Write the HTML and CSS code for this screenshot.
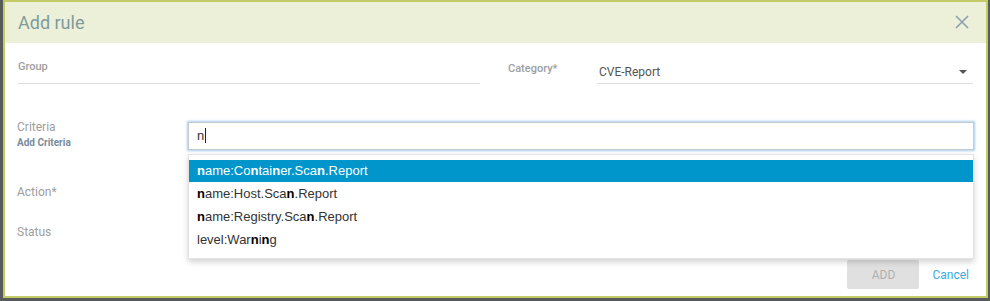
FILE: index.html
```html
<!DOCTYPE html>
<html lang="en">
<head>
    <meta charset="UTF-8">
    <meta name="viewport" content="width=device-width, initial-scale=1.0">
    <title>Add rule</title>
    <link rel="stylesheet" href="styles.css">
</head>
<body>
    <div class="dialog">
        <div class="dialog-header">
            <h1>Add rule</h1>
            <svg class="close" width="14" height="14" viewBox="0 0 14 14">
                <path d="M1 1 L13 13 M13 1 L1 13" stroke="#8e9fae" stroke-width="1.6" fill="none"/>
            </svg>
        </div>

        <div class="dialog-body">
            <div class="row row-top">
                <div class="group-field">Group</div>
                <div class="category-label">Category*</div>
                <div class="select-field">
                    <span>CVE-Report</span>
                    <span class="arrow"></span>
                </div>
            </div>

            <div class="row row-criteria">
                <div class="side-label">
                    <div class="criteria-title">Criteria</div>
                    <div class="criteria-sub">Add Criteria</div>
                </div>
                <div class="criteria-field">
                    <div class="text-input">n<span class="caret"></span></div>
                    <ul class="suggestions">
                        <li class="active"><b>n</b>ame:Co<b>n</b>tai<b>n</b>er.Sca<b>n</b>.Report</li>
                        <li><b>n</b>ame:Host.Sca<b>n</b>.Report</li>
                        <li><b>n</b>ame:Registry.Sca<b>n</b>.Report</li>
                        <li>level:War<b>n</b>i<b>n</b>g</li>
                    </ul>
                </div>
            </div>

            <div class="row row-action">
                <div class="side-label">Action*</div>
            </div>

            <div class="row row-status">
                <div class="side-label">Status</div>
            </div>

            <div class="dialog-footer">
                <button type="button" class="btn-add" disabled>ADD</button>
                <a class="btn-cancel">Cancel</a>
            </div>
        </div>
    </div>
</body>
</html>
```

FILE: styles.css
```css
body {
    margin: 0;
    background-color: #595b5a;
    font-family: 'Roboto', 'Liberation Sans', sans-serif;
    height: 301px;
    overflow: hidden;
}

.dialog {
    box-sizing: border-box;
    width: 985px;
    margin-left: 3px;
    background: #ffffff;
    border: 2px solid #c3cb68;
}

.dialog-header {
    height: 41px;
    background: #edf0d8;
    display: flex;
    align-items: center;
    justify-content: space-between;
    padding: 0 17px 0 13px;
}

h1 {
    margin: 0;
    font-size: 18px;
    font-weight: 400;
    color: #7e9b9d;
}

.close {
    margin-top: -2px;
}

.dialog-body {
    padding: 0 12px 7px 12px;
}

.row {
    display: flex;
}

.row-top {
    margin-top: 12px;
    height: 29px;
}

.group-field {
    box-sizing: border-box;
    width: 462px;
    margin-left: 1px;
    height: 29px;
    border-bottom: 1px solid #dedede;
    padding-top: 5px;
    font-size: 11px;
    line-height: 14px;
    font-weight: 500;
    color: #9e9e9e;
}

.category-label {
    width: 89px;
    margin-left: 28px;
    padding-top: 7px;
    font-size: 11px;
    line-height: 14px;
    font-weight: 500;
    color: #9e9e9e;
}

.select-field {
    box-sizing: border-box;
    width: 376px;
    height: 29px;
    border-bottom: 1px solid #dedede;
    padding: 10px 6px 0 2px;
    display: flex;
    justify-content: space-between;
    font-size: 12px;
    line-height: 14px;
    color: #555555;
}

.arrow {
    margin-top: 5px;
    width: 0;
    height: 0;
    border-left: 4px solid transparent;
    border-right: 4px solid transparent;
    border-top: 4px solid #555555;
}

.row-criteria {
    margin-top: 38px;
    height: 28px;
    align-items: flex-start;
}

.side-label {
    width: 171px;
    font-size: 12px;
    line-height: 20px;
    color: #9e9e9e;
}

.row-criteria .side-label {
    margin-top: -2px;
}

.criteria-title {
    line-height: 14px;
}

.criteria-sub {
    margin-top: 3px;
    font-size: 10px;
    line-height: 12px;
    font-weight: 700;
    color: #7a8b9c;
}

.criteria-field {
    position: relative;
    width: 786px;
}

.text-input {
    box-sizing: border-box;
    height: 28px;
    border: 1px solid #c6cbd0;
    box-shadow: 0 0 2px 1px #a6cdef;
    padding-left: 8px;
    font-family: 'Liberation Sans', Arial, sans-serif;
    font-size: 13px;
    line-height: 26px;
    color: #333333;
}

.caret {
    display: inline-block;
    width: 1px;
    height: 15px;
    margin-left: 1px;
    background: #222222;
    vertical-align: -3px;
}

.suggestions {
    position: absolute;
    top: 32px;
    left: 0;
    right: 0;
    margin: 0;
    padding: 5px 0 7px 0;
    list-style: none;
    background: #ffffff;
    border: 1px solid #e2e2e2;
    box-shadow: 0 3px 6px rgba(0, 0, 0, 0.18);
    font-family: 'Liberation Sans', Arial, sans-serif;
    font-size: 13px;
    color: #333333;
}

.suggestions li {
    height: 23px;
    line-height: 23px;
    padding-left: 8px;
}

.suggestions li.active {
    background: #0096cc;
    color: #ffffff;
    height: 22px;
    line-height: 22px;
}

.suggestions b {
    color: #000000;
}

.suggestions li.active b {
    color: #ffffff;
}

.row-action {
    margin-top: 32px;
    height: 20px;
}

.row-status {
    margin-top: 20px;
    height: 20px;
}

.dialog-footer {
    margin-top: 18px;
    display: flex;
    justify-content: flex-end;
    align-items: center;
    padding-right: 5px;
}

.btn-add {
    width: 72px;
    height: 29px;
    border: none;
    border-radius: 2px;
    background: #e0e0e0;
    color: #b0b0b0;
    font-family: 'Roboto', sans-serif;
    font-size: 12px;
}

.btn-cancel {
    margin-left: 13px;
    font-size: 12px;
    color: #3aaae6;
    cursor: pointer;
}
```
